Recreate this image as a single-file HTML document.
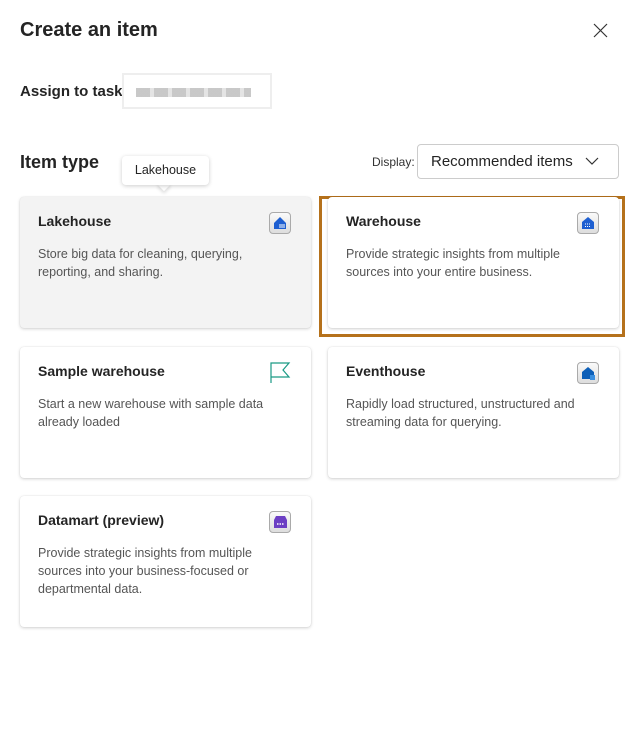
<!DOCTYPE html>
<html><head><meta charset="utf-8"><style>
*{box-sizing:border-box;margin:0;padding:0}
body{width:629px;height:731px;background:#fff;font-family:"Segoe UI","Liberation Sans",sans-serif;color:#242424;position:relative;overflow:hidden}
.abs{position:absolute}
h1{position:absolute;left:20px;top:19px;font-size:20px;font-weight:600}
.card{position:absolute;width:291px;height:131px;background:#fff;border-radius:4px;box-shadow:0 1px 3px rgba(0,0,0,.18),0 0 1px rgba(0,0,0,.12)}
.card .t{position:absolute;left:18px;top:16px;font-size:14px;font-weight:600}
.card .d{position:absolute;left:18px;top:48px;width:240px;font-size:12.5px;line-height:18px;color:#555}
.card .ic{position:absolute;right:20px;top:15px;width:22px;height:22px}
.ibox{width:22px;height:22px;border:1px solid #aaa;border-radius:4px;background:linear-gradient(#fafafa,#ddd);display:flex;align-items:center;justify-content:center}
</style></head><body>
<h1>Create an item</h1>
<svg class="abs" style="left:593px;top:23px" width="15" height="15" viewBox="0 0 15 15"><path d="M1 1L14 14M14 1L1 14" stroke="#333" stroke-width="1.2"/></svg>
<div class="abs" style="left:20px;top:83px;font-size:15px;font-weight:600">Assign to task</div>
<div class="abs" style="left:122px;top:73px;width:150px;height:36px;border:2px solid #eee;background:#fff"></div>
<div class="abs" style="left:136px;top:88px;width:115px;height:9px;background:repeating-linear-gradient(90deg,#bbb 0 14px,#ddd 14px 18px);opacity:.8"></div>
<div class="abs" style="left:20px;top:152px;font-size:18px;font-weight:600">Item type</div>
<div class="abs" style="left:122px;top:156px;width:87px;height:29px;background:#fff;border-radius:4px;box-shadow:0 1px 4px rgba(0,0,0,.2);font-size:12.5px;text-align:center;line-height:29px;z-index:3">Lakehouse</div>
<div class="abs" style="left:159px;top:179px;width:10px;height:10px;background:#fff;transform:rotate(45deg);box-shadow:2px 2px 3px rgba(0,0,0,.12);z-index:2"></div>
<div class="abs" style="left:372px;top:155px;font-size:12px;color:#333">Display:</div>
<div class="abs" style="left:417px;top:144px;width:202px;height:35px;border:1px solid #ccc;border-radius:4px;font-size:15px;padding:8px 0 0 13px">Recommended items</div>
<svg class="abs" style="left:585px;top:157px" width="14" height="9" viewBox="0 0 14 9"><path d="M1 1L7 7L13 1" fill="none" stroke="#333" stroke-width="1.2"/></svg>

<div class="abs" style="left:319px;top:196px;width:306px;height:141px;border:3px solid #b5711b"></div>

<div class="card" style="left:20px;top:197px;background:#f3f3f3"><div class="t">Lakehouse</div><div class="d">Store big data for cleaning, querying, reporting, and sharing.</div>
<div class="ic ibox"><svg width="14" height="14" viewBox="0 0 14 14"><path d="M1 7L7 1L13 7V13H1Z" fill="#1e5fd1"/><path d="M6 9h6M6 11h6" stroke="#fff" stroke-width="1"/></svg></div></div>
<div class="card" style="left:328px;top:197px"><div class="t">Warehouse</div><div class="d">Provide strategic insights from multiple sources into your entire business.</div>
<div class="ic ibox"><svg width="14" height="14" viewBox="0 0 14 14"><path d="M1 6L7 1L13 6V13H1Z" fill="#1e5fd1"/><path d="M4 8h6M4 10.5h6" stroke="#fff" stroke-width="1" stroke-dasharray="1 1"/></svg></div></div>
<div class="card" style="left:20px;top:347px"><div class="t">Sample warehouse</div><div class="d">Start a new warehouse with sample data already loaded</div>
<svg class="ic" style="right:20px" width="22" height="22" viewBox="0 0 22 22"><path d="M2 21V1H20L14 8L20 15H2" fill="none" stroke="#1a9a85" stroke-width="1.2"/></svg></div>
<div class="card" style="left:328px;top:347px"><div class="t">Eventhouse</div><div class="d">Rapidly load structured, unstructured and streaming data for querying.</div>
<div class="ic ibox"><svg width="14" height="14" viewBox="0 0 14 14"><path d="M1 6L7 1L13 6V13H1Z" fill="#0d5fb8"/><rect x="9" y="9" width="6" height="6" fill="#3a8fe0"/></svg></div></div>
<div class="card" style="left:20px;top:496px"><div class="t">Datamart (preview)</div><div class="d">Provide strategic insights from multiple sources into your business-focused or departmental data.</div>
<div class="ic ibox"><svg width="15" height="13" viewBox="0 0 15 13"><path d="M1 4L3 0H12L14 4V12H1Z" fill="#6c3fc4"/><path d="M4 8h7" stroke="#fff" stroke-width="1.5" stroke-dasharray="1.5 1"/></svg></div></div>
</body></html>
